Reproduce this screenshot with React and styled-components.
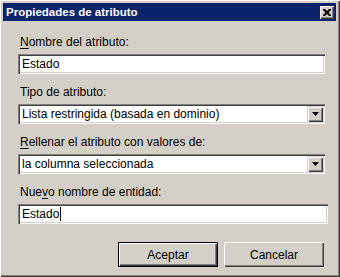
import styled, { createGlobalStyle } from "styled-components";

const GlobalStyle = createGlobalStyle`
    html, body {
        margin: 0;
        padding: 0;
        background: #d4d0c8;
    }
    body {
        font-family: "Liberation Sans", Arial, sans-serif;
        font-size: 12px;
    }
`;

function CloseIcon() {
    return (
        <svg width="8" height="7" viewBox="0 0 8 7">
            <path d="M0 0h2l2 2 2-2h2v1L5.5 3.5 8 6v1H6L4 5 2 7H0V6l2.5-2.5L0 1z" fill="#000" />
        </svg>
    );
}

function Arrow() {
    return (
        <svg width="7" height="4" viewBox="0 0 7 4">
            <path d="M0 0h7L3.5 4z" fill="#000" />
        </svg>
    );
}

function App() {
    return (
        <>
            <GlobalStyle />
            <Window>
                <TitleBar>
                    <Title>Propiedades de atributo</Title>
                    <CloseButton>
                        <CloseIcon />
                    </CloseButton>
                </TitleBar>
                <Body>
                    <Field>
                        <Label>
                            <u>N</u>ombre del atributo:
                        </Label>
                        <TextBox>Estado</TextBox>
                    </Field>
                    <Field>
                        <Label>Tipo de atributo:</Label>
                        <Combo>
                            <ComboText>Lista restringida (basada en dominio)</ComboText>
                            <DropButton>
                                <Arrow />
                            </DropButton>
                        </Combo>
                    </Field>
                    <Field>
                        <Label>
                            <u>R</u>ellenar el atributo con valores de:
                        </Label>
                        <Combo>
                            <ComboText>la columna seleccionada</ComboText>
                            <DropButton>
                                <Arrow />
                            </DropButton>
                        </Combo>
                    </Field>
                    <Field>
                        <Label>
                            Nue<u>v</u>o nombre de entidad:
                        </Label>
                        <TextBox $wide>
                            Estado
                            <Caret />
                        </TextBox>
                    </Field>
                    <Buttons>
                        <Button $default>Aceptar</Button>
                        <Button>Cancelar</Button>
                    </Buttons>
                </Body>
            </Window>
        </>
    );
}

const Window = styled.div`
    box-sizing: border-box;
    width: 340px;
    height: 277px;
    padding: 3px;
    background: #d4d0c8;
    box-shadow: inset 1px 1px #ffffff, inset -1px -1px #404040,
        inset -2px -2px #808080;
    display: flex;
    flex-direction: column;
`;

const TitleBar = styled.div`
    height: 18px;
    margin-right: 1px;
    background: #0a246a;
    display: flex;
    align-items: center;
    justify-content: space-between;
    padding: 0 2px 0 3px;
`;

const Title = styled.span`
    color: #fff;
    font-weight: bold;
    font-size: 11.5px;
`;

const CloseButton = styled.div`
    box-sizing: border-box;
    width: 14px;
    height: 13px;
    background: #d4d0c8;
    display: flex;
    align-items: center;
    justify-content: center;
    box-shadow: inset 1px 1px #ffffff, inset -1px -1px #404040,
        inset -2px -2px #808080;
`;

const Body = styled.div`
    flex: 1;
    padding: 14px 12px 0 15px;
    display: flex;
    flex-direction: column;
    gap: 11px;
`;

const Field = styled.div`
    display: flex;
    flex-direction: column;
    gap: 5px;
`;

const Label = styled.div`
    line-height: 14px;
    color: #000;
    padding-left: 2px;

    u {
        text-decoration-thickness: 1px;
        text-underline-offset: 2px;
    }
`;

const Sunken = styled.div`
    box-sizing: border-box;
    height: 20px;
    background: #fff;
    box-shadow: inset 1px 1px #808080, inset 2px 2px #404040,
        inset -1px -1px #ffffff, inset -2px -2px #d4d0c8;
    display: flex;
    align-items: center;
`;

const TextBox = styled(Sunken)`
    padding-left: 4px;
    margin-right: ${({ $wide }) => ($wide ? "-3px" : "0")};
    line-height: 14px;
`;

const Caret = styled.span`
    display: inline-block;
    width: 1px;
    height: 14px;
    background: #000;
    margin-left: 1px;
`;

const Combo = styled(Sunken)`
    justify-content: space-between;
    padding: 2px;
`;

const ComboText = styled.span`
    padding-left: 2px;
    line-height: 14px;
`;

const DropButton = styled.div`
    box-sizing: border-box;
    width: 16px;
    height: 16px;
    background: #d4d0c8;
    display: flex;
    align-items: center;
    justify-content: center;
    box-shadow: inset 1px 1px #d4d0c8, inset 2px 2px #ffffff,
        inset -1px -1px #404040, inset -2px -2px #808080;
`;

const Buttons = styled.div`
    display: flex;
    justify-content: flex-end;
    gap: 6px;
    margin-top: 7px;
    padding-right: 1px;
`;

const Button = styled.div`
    box-sizing: border-box;
    width: 100px;
    height: 25px;
    display: flex;
    align-items: center;
    justify-content: center;
    background: #d4d0c8;
    color: #000;
    border: ${({ $default }) => ($default ? "1px solid #000" : "none")};
    box-shadow: inset 1px 1px #ffffff, inset -1px -1px #404040,
        inset -2px -2px #808080;
`;

export default App;
